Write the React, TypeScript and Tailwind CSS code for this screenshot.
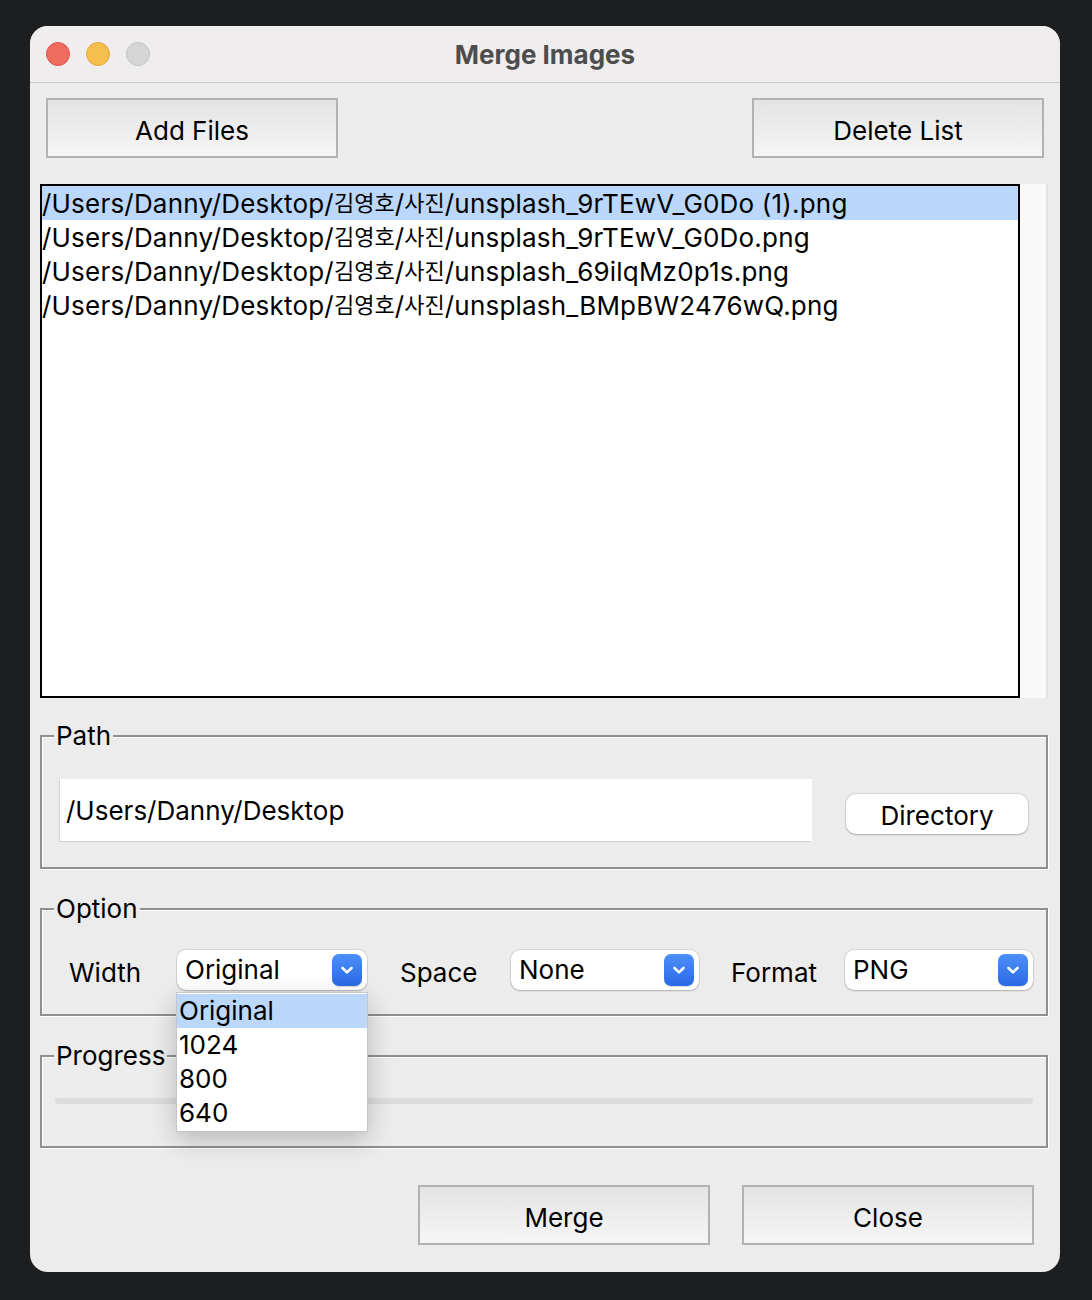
import type { ReactNode } from 'react';

const files = [
  '/Users/Danny/Desktop/김영호/사진/unsplash_9rTEwV_G0Do (1).png',
  '/Users/Danny/Desktop/김영호/사진/unsplash_9rTEwV_G0Do.png',
  '/Users/Danny/Desktop/김영호/사진/unsplash_69ilqMz0p1s.png',
  '/Users/Danny/Desktop/김영호/사진/unsplash_BMpBW2476wQ.png'
];

const widthOptions = ['Original', '1024', '800', '640'];

// Hangul runs are set a bit smaller, like the system font does next to Latin text
function PathText({ text }: { text: string }) {
  const parts = text.split(/([\uac00-\ud7a3]+)/);
  return (
    <>
      {parts.map((p, i) =>
        /[\uac00-\ud7a3]/.test(p) ? (
          <span key={i} className="text-[22px] tracking-normal">
            {p}
          </span>
        ) : (
          <span key={i}>{p}</span>
        )
      )}
    </>
  );
}

function PushButton({ label }: { label: string }) {
  return (
    <button
      type="button"
      className="flex h-[60px] w-[292px] items-center justify-center border-2 border-[#b2b2b2] bg-gradient-to-b from-[#e4e4e4] to-[#f5f5f5] pt-[5px] text-[26px] text-black"
    >
      {label}
    </button>
  );
}

function Group({ title, className, children }: { title: string; className: string; children: ReactNode }) {
  return (
    <fieldset
      className={`min-w-0 border-2 border-[#8f8f8f] px-0 shadow-[inset_1px_1px_0_#ffffff,1px_1px_0_#ffffff] ${className}`}
    >
      <legend className="ml-[12px] bg-[#ececec] px-[2px] text-[26px] leading-[28px] text-black">{title}</legend>
      {children}
    </fieldset>
  );
}

function Chevron() {
  return (
    <span className="flex h-[32px] w-[30px] items-center justify-center rounded-[7px] bg-gradient-to-b from-[#4c8ff9] to-[#2a6ae6] shadow-[0_1px_1px_rgba(0,0,0,0.15)]">
      <svg width="14" height="10" viewBox="0 0 14 10" fill="none">
        <path d="M2.5 3 L7 7.4 L11.5 3" stroke="#ffffff" strokeWidth="2.6" strokeLinecap="round" strokeLinejoin="round" />
      </svg>
    </span>
  );
}

function Combo({ value, width, children }: { value: string; width: string; children?: ReactNode }) {
  return (
    <div className={`relative ${width}`}>
      <div className="flex h-[40px] items-center justify-between rounded-[9px] bg-white pl-[8px] pr-[5px] shadow-[0_0_0_1px_rgba(0,0,0,0.08),0_1px_2px_rgba(0,0,0,0.2)]">
        <span className="text-[26px] text-black">{value}</span>
        <Chevron />
      </div>
      {children}
    </div>
  );
}

export default function App() {
  return (
    <div
      className="h-[1300px] w-[1092px] bg-[#1d1e20] pl-[30px] pt-[26px]"
      style={{ fontFamily: 'Inter, "Noto Sans CJK KR", sans-serif' }}
    >
      <div className="flex h-[1246px] w-[1030px] flex-col overflow-hidden rounded-[18px] bg-[#ececec]">
        <div className="relative flex h-[57px] shrink-0 items-center border-b border-[#c8c8c8] bg-[#efedee] pl-[16px]">
          <div className="flex gap-[16px]">
            <span className="h-[24px] w-[24px] rounded-full border border-[#e0524a] bg-[#ee6b60]" />
            <span className="h-[24px] w-[24px] rounded-full border border-[#dfa63a] bg-[#f5bf4f]" />
            <span className="h-[24px] w-[24px] rounded-full border border-[#c3c3c3] bg-[#d6d5d6]" />
          </div>
          <div className="absolute inset-0 flex items-center justify-center text-[26px] font-bold text-[#4d4d4d]">
            Merge Images
          </div>
        </div>

        <div className="flex justify-between px-[16px] pt-[15px]">
          <PushButton label="Add Files" />
          <PushButton label="Delete List" />
        </div>

        <div className="ml-[10px] mr-[12px] mt-[26px] flex h-[514px]">
          <div className="w-[980px] border-2 border-black bg-white">
            {files.map((f, i) => (
              <div
                key={f}
                className={`flex h-[34px] items-center whitespace-nowrap text-[26px] tracking-[0.2px] text-black ${i === 0 ? 'bg-[#bbd7fa]' : ''}`}
              >
                <PathText text={f} />
              </div>
            ))}
          </div>
          <div className="w-[28px] border-r-2 border-[#e2e2e2] bg-[#f9f9f9]" />
        </div>

        <div className="ml-[10px] mr-[12px] mt-[24px] flex flex-col gap-[26px]">
          <Group title="Path" className="pb-[26px] pt-[29px]">
            <div className="flex items-start pl-[18px] pr-[18px]">
              <div className="flex h-[62px] w-[752px] items-center bg-white pl-[6px] text-[26px] text-black shadow-[-1px_1px_0_#cfcfcf]">
                /Users/Danny/Desktop
              </div>
              <button
                type="button"
                className="ml-auto mt-[15px] flex h-[40px] w-[182px] items-center justify-center rounded-[10px] bg-white pt-[2px] text-[26px] text-black shadow-[0_0_0_1px_rgba(0,0,0,0.08),0_1px_2px_rgba(0,0,0,0.2)]"
              >
                Directory
              </button>
            </div>
          </Group>

          <Group title="Option" className="relative z-10 pb-[22px] pt-[24px]">
            <div className="flex items-center pl-[27px] text-[26px] text-black">
              <span className="mt-[6px] w-[108px]">Width</span>
              <Combo value="Original" width="w-[190px]">
                <div className="absolute left-[-1px] top-[42px] w-[192px] border border-[#c6c6c6] bg-white py-[1px] shadow-[0_8px_24px_rgba(0,0,0,0.22)]">
                  {widthOptions.map((o, i) => (
                    <div
                      key={o}
                      className={`flex h-[34px] items-center pl-[2px] text-[26px] text-black ${i === 0 ? 'bg-[#bbd7fa]' : ''}`}
                    >
                      {o}
                    </div>
                  ))}
                </div>
              </Combo>
              <span className="ml-[33px] mt-[6px] w-[111px]">Space</span>
              <Combo value="None" width="w-[188px]" />
              <span className="ml-[32px] mt-[6px] w-[114px]">Format</span>
              <Combo value="PNG" width="w-[188px]" />
            </div>
          </Group>

          <Group title="Progress" className="pb-[42px] pt-[28px]">
            <div className="mx-[13px] h-[6px] rounded-full bg-[#dcdcdc]" />
          </Group>
        </div>

        <div className="mt-[37px] flex justify-end gap-[32px] pr-[26px]">
          <PushButton label="Merge" />
          <PushButton label="Close" />
        </div>
      </div>
    </div>
  );
}
